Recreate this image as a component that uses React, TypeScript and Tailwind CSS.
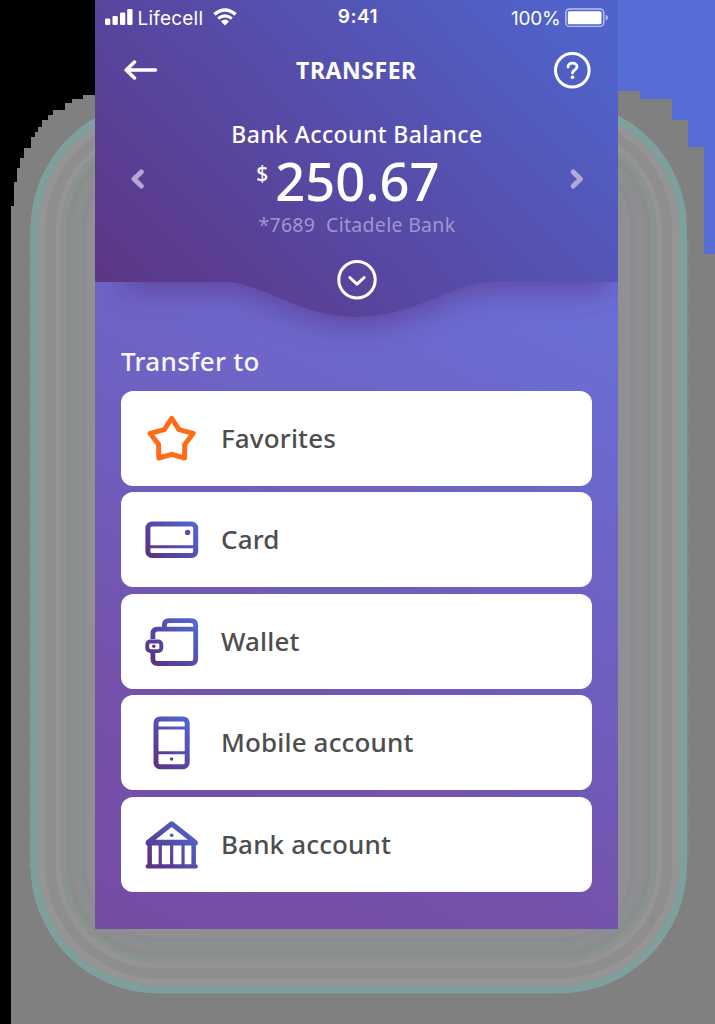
import React from "react";

const halo = [
  { inset: 0, color: "#7f9f9d" },
  { inset: 8, color: "#969494" },
  { inset: 15, color: "#8f8e8e" },
  { inset: 25, color: "#969494" },
  { inset: 30, color: "#8b9391" },
  { inset: 36, color: "#898e8c" },
  { inset: 42, color: "#8e8e91" },
  { inset: 47, color: "#8a908f" },
  { inset: 51, color: "#8c8b93" },
  { inset: 56, color: "#908f92" },
];

function Backdrop() {
  return (
    <svg className="absolute inset-0" width="715" height="1024" viewBox="0 0 715 1024">
      <rect width="715" height="1024" fill="#808080" />
      <g shapeRendering="crispEdges">
        <path d="M0 0H95V95H83V99H72V103H65V110H53V115H48V120H42V127H38V132H35V137H31V148H24V158H20V168H17V182H14V206H11V1024H0Z" fill="#000" />
        <path d="M618 0H715V254H704V147H688V120H672V99H640V91H618Z" fill="#566cd7" />
      </g>
      {halo.map((h) => (
        <rect
          key={h.inset}
          x={30.5 + h.inset}
          y={101 + h.inset}
          width={656.5 - h.inset * 2}
          height={892.5 - h.inset * 2}
          rx={128 - h.inset}
          fill={h.color}
        />
      ))}
      <path d="M30.5 225V870M687.5 240V860" stroke="#7f9f9d" strokeWidth="2" strokeDasharray="1 2" />
    </svg>
  );
}

function HeaderShape() {
  const curve = "H395C359 282 319 317 262 317S165 282 130 282";
  return (
    <svg className="absolute left-0 top-0" width="524" height="390" viewBox="0 0 524 390">
      <defs>
        <linearGradient id="head" gradientUnits="userSpaceOnUse" x1="75" y1="330" x2="440" y2="-20">
          <stop offset="0" stopColor="#5c3788" />
          <stop offset="0.5" stopColor="#564ca8" />
          <stop offset="1" stopColor="#5063ca" />
        </linearGradient>
        <filter id="soft" x="-20%" y="-20%" width="140%" height="160%">
          <feGaussianBlur stdDeviation="15" />
        </filter>
      </defs>
      <path d={`M30 200H514V282${curve}H30Z`} transform="translate(0 8)" fill="#5a3085" opacity="0.65" filter="url(#soft)" />
      <path d={`M0 0H524V282${curve}H0Z`} fill="url(#head)" />
    </svg>
  );
}

function Gradient({ id }: { id: string }) {
  return (
    <defs>
      <linearGradient id={id} gradientUnits="userSpaceOnUse" x1="6" y1="46" x2="48" y2="8">
        <stop offset="0" stopColor="#5c3284" />
        <stop offset="1" stopColor="#4f67d0" />
      </linearGradient>
    </defs>
  );
}

function StarIcon() {
  return (
    <svg width="54" height="54" viewBox="0 0 54 54" fill="none">
      <path
        d="M26.7 6.4L34 17.6L48.2 21.3L39.7 32.4L39.6 46L26.7 42.3L13.8 46L13.6 32.4L5 21.3L19.3 17.6Z"
        stroke="#ff6b17"
        strokeWidth="5"
        strokeLinejoin="round"
      />
    </svg>
  );
}

function CardIcon() {
  return (
    <svg width="54" height="54" viewBox="0 0 54 54" fill="none">
      <Gradient id="g-card" />
      <rect x="2.9" y="11" width="47.8" height="31.4" rx="4" stroke="url(#g-card)" strokeWidth="5" />
      <path d="M4 33.7H50V33.8H4Z" stroke="url(#g-card)" strokeWidth="3" />
      <circle cx="42.6" cy="19.4" r="2.7" fill="#5650b0" />
    </svg>
  );
}

function WalletIcon() {
  return (
    <svg width="54" height="54" viewBox="0 0 54 54" fill="none">
      <Gradient id="g-wallet" />
      <g stroke="url(#g-wallet)" strokeWidth="4.8">
        <path d="M7.9 25V19.6Q7.9 15.1 12.4 15.1H50.7M7.9 37V44.5Q7.9 49.5 12.9 49.5H45.7Q50.7 49.5 50.7 44.5V11.3Q50.7 6.7 45.7 6.7H24Q19.4 6.7 19.4 11V14" />
        <rect x="2.3" y="27.5" width="14" height="9.6" rx="3" strokeWidth="3.9" />
      </g>
      <circle cx="8.8" cy="32.3" r="1.8" fill="#5b3a90" />
    </svg>
  );
}

function PhoneIcon() {
  return (
    <svg width="54" height="54" viewBox="0 0 54 54" fill="none">
      <Gradient id="g-phone" />
      <rect x="11" y="2.9" width="31.2" height="47.8" rx="4" stroke="url(#g-phone)" strokeWidth="5" />
      <path d="M12 12H42V12.1H12ZM12 36.7H42V36.8H12Z" stroke="url(#g-phone)" strokeWidth="2.8" />
      <circle cx="26.6" cy="43" r="1.8" fill="#5648a5" />
    </svg>
  );
}

function BankIcon() {
  return (
    <svg width="54" height="54" viewBox="0 0 54 54" fill="none">
      <Gradient id="g-bank" />
      <g stroke="url(#g-bank)" strokeLinejoin="round" strokeLinecap="round">
        <path d="M3.3 25.2L26.7 6.7L50 25.2Z" strokeWidth="5" />
        <path d="M2.6 26.2H50.8V26.4H2.6ZM2.6 49.2H50.8V49.4H2.6Z" strokeWidth="4" />
        <path d="M4.6 27H4.7V49H4.6ZM48.6 27H48.7V49H48.6Z" strokeWidth="4.4" />
        <path d="M15.2 28H15.3V48H15.2ZM26.6 28H26.7V48H26.6ZM38 28H38.1V48H38Z" strokeWidth="3.1" />
      </g>
      <circle cx="26.7" cy="18.3" r="1.8" fill="#5252b2" />
    </svg>
  );
}

const items = [
  { label: "Favorites", icon: <StarIcon /> },
  { label: "Card", icon: <CardIcon /> },
  { label: "Wallet", icon: <WalletIcon /> },
  { label: "Mobile account", icon: <PhoneIcon /> },
  { label: "Bank account", icon: <BankIcon /> },
];

function StatusBar() {
  return (
    <div className="grid h-9 grid-cols-3 items-center pl-[10px] pr-[9px] font-['Inter',sans-serif] text-white">
      <div className="flex items-center">
        <svg className="-mt-[2px]" width="28" height="18" viewBox="0 0 28 18" fill="#fff">
          <rect x="0" y="10.5" width="5.3" height="6.5" rx="1.3" />
          <rect x="7.5" y="8" width="5.3" height="9" rx="1.3" />
          <rect x="15" y="4.5" width="5.3" height="12.5" rx="1.3" />
          <rect x="22.2" y="1" width="5.3" height="16" rx="1.3" />
        </svg>
        <span className="ml-[5px] mt-[2px] text-[19px] font-normal leading-6 tracking-[0.2px]">Lifecell</span>
        <svg className="-mt-[3px] ml-[10px]" width="24" height="18" viewBox="0 0 24 18" fill="none">
          <path d="M1.4 6.4Q12 -2.4 22.6 6.4" stroke="#fff" strokeWidth="3.5" />
          <path d="M5.2 10.6Q12 5 18.8 10.6" stroke="#fff" strokeWidth="3.1" />
          <path d="M8 13.4Q12 9.7 16 13.4L12 17.4Z" fill="#fff" />
        </svg>
      </div>
      <span className="-mt-[2px] pl-[2px] text-center text-[19px] font-semibold leading-6 tracking-[0.5px]">9:41</span>
      <div className="flex items-center justify-end">
        <span className="mt-px text-[19px] leading-6 tracking-[-0.3px]">100%</span>
        <svg className="ml-[5px]" width="44" height="20" viewBox="0 0 44 20">
          <rect x="0.8" y="1" width="38" height="17.4" rx="3.6" fill="none" stroke="#fff" strokeOpacity="0.6" strokeWidth="1.4" />
          <rect x="2.8" y="3.2" width="33.7" height="13" rx="1.5" fill="#fff" />
          <path d="M40.6 6.7Q43 7.5 43 9.7T40.6 12.8Z" fill="#fff" opacity="0.6" />
        </svg>
      </div>
    </div>
  );
}

function Header() {
  return (
    <header className="relative h-[318px] text-white">
      <StatusBar />
      <div className="flex h-[69px] items-center justify-between pl-[29px] pr-[27px]">
        <svg className="-mt-px" width="35" height="24" viewBox="0 0 35 24" fill="none" stroke="#fff" strokeWidth="3.5" strokeLinecap="round" strokeLinejoin="round">
          <path d="M31.5 12H2.5M10.5 4L2.2 12L10.5 20" />
        </svg>
        <h1 className="-mt-px text-[23px] font-bold leading-8 tracking-[0.55px]">TRANSFER</h1>
        <svg width="37" height="37" viewBox="0 0 37 37" fill="none" stroke="#fff" strokeLinecap="round" strokeLinejoin="round">
          <circle cx="18.3" cy="18.3" r="16.8" strokeWidth="3" />
          <path d="M14 15.1C14 9.7 23 9.7 23 15C23 18.2 18.5 17.8 18.5 21" strokeWidth="2.8" />
          <circle cx="18.5" cy="25.2" r="1.8" fill="#fff" stroke="none" />
        </svg>
      </div>
      <div className="flex h-[150px] items-center justify-between px-[33px]">
        <svg className="mt-[-3px]" width="16" height="22" viewBox="0 0 16 22" fill="none" stroke="#b5a7da" strokeWidth="5" strokeLinecap="round" strokeLinejoin="round">
          <path d="M13.3 4L6 11L13.3 18" />
        </svg>
        <div className="flex h-full flex-col items-center pt-[13px]">
          <div className="pl-px text-[23px] font-medium leading-[32px] tracking-[0.4px]">Bank Account Balance</div>
          <div className="mr-[17px] flex h-[62px] items-start">
            <span className="mt-[7px] text-[21px] font-medium leading-[32px]">$</span>
            <span className="ml-[7px] text-[52.5px] font-medium leading-[62px]">250.67</span>
          </div>
          <div className="whitespace-pre pl-px text-[19.5px] leading-[26px] tracking-[0.3px] text-[#a096d0]">*7689  Citadele Bank</div>
        </div>
        <svg className="mt-[-3px]" width="16" height="22" viewBox="0 0 16 22" fill="none" stroke="#b5a7da" strokeWidth="5" strokeLinecap="round" strokeLinejoin="round">
          <path d="M4.2 4L11.5 11L4.2 18" />
        </svg>
      </div>
      <div className="flex justify-center pl-px pt-[5px]">
        <svg width="40" height="40" viewBox="0 0 40 40" fill="none" stroke="#fff" strokeWidth="3" strokeLinecap="round" strokeLinejoin="round">
          <circle cx="20" cy="19.7" r="18.2" />
          <path d="M12.8 17.5L20 24.2L27.2 17.5" />
        </svg>
      </div>
    </header>
  );
}

export default function App() {
  return (
    <div className="relative h-[1024px] w-[715px] overflow-hidden font-['Noto_Sans','Open_Sans',sans-serif]">
      <Backdrop />
      <main className="relative ml-[94.6px] h-[929px] w-[523.7px] overflow-hidden bg-[linear-gradient(208deg,#6a6ed5_28%,#6e62c3_52%,#7451ab_79%,#764ca4_100%)]">
        <HeaderShape />
        <Header />
        <section className="relative px-[26.4px]">
          <h2 className="h-[73px] pt-[25px] text-[26px] font-medium leading-9 tracking-[0.3px] text-[#f7f5ff]">Transfer to</h2>
          <ul className="flex flex-col gap-[6.4px]">
            {items.map((item) => (
              <li key={item.label} className="flex h-[95px] items-center rounded-xl bg-white pl-[24.3px]">
                {item.icon}
                <span className="-mt-px ml-[21.7px] text-[26px] font-medium leading-9 tracking-[0.15px] text-[#4d4d4d]">{item.label}</span>
              </li>
            ))}
          </ul>
        </section>
      </main>
    </div>
  );
}
